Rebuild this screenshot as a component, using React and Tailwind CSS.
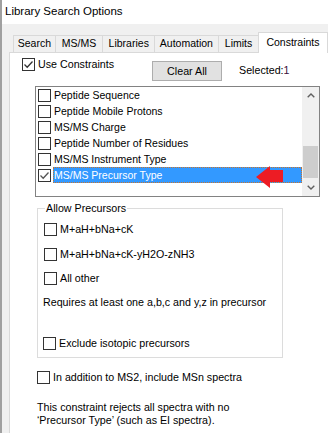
import React from "react";

const TABS = [
  { label: "Search", w: "w-[42px]" },
  { label: "MS/MS", w: "w-[48px]" },
  { label: "Libraries", w: "w-[52px]" },
  { label: "Automation", w: "w-[64px]" },
  { label: "Limits", w: "w-[41px]" },
];

const ITEMS = [
  "Peptide Sequence",
  "Peptide Mobile Protons",
  "MS/MS Charge",
  "Peptide Number of Residues",
  "MS/MS Instrument Type",
  "MS/MS Precursor Type",
];

function Box({ checked, tone = "#333333" }) {
  return (
    <span className="flex h-[13px] w-[13px] shrink-0 items-center justify-center border border-[#333333] bg-white">
      {checked && (
        <svg width="11" height="11" viewBox="0 0 11 11">
          <path d="M1.5 5.5 L4.2 8.2 L9.5 2.5" fill="none" stroke={tone} strokeWidth="1.3" />
        </svg>
      )}
    </span>
  );
}

function Check({ label, className = "" }) {
  return (
    <div className={`flex items-center gap-[3px] leading-[14px] ${className}`}>
      <Box />
      <span>{label}</span>
    </div>
  );
}

function Chevron({ down }) {
  return (
    <svg width="8" height="5" viewBox="0 0 8 5">
      <path
        d={down ? "M0.7 0.7 L4 4 L7.3 0.7" : "M0.7 4.3 L4 1 L7.3 4.3"}
        fill="none"
        stroke="#606060"
        strokeWidth="1.4"
      />
    </svg>
  );
}

export default function App() {
  return (
    <div className="flex h-[433px] w-[328px] flex-col overflow-hidden border-l-2 border-[#a0a0a0] bg-[#f0f0f0] text-[10.7px] text-black font-['Liberation_Sans',Arial,sans-serif]">
      {/* title bar */}
      <div className="flex h-[24px] shrink-0 items-center bg-white pl-[3px] text-[11.5px]">
        Library Search Options
      </div>

      <div className="ml-[7px] flex flex-1 flex-col">
        {/* tab strip */}
        <div className="relative z-10 flex h-[28px] shrink-0 items-end pl-[4px] text-[10.5px]">
          {TABS.map((t) => (
            <div
              key={t.label}
              className={`flex h-[17px] items-center justify-center border-l border-t border-[#d9d9d9] bg-[#f0f0f0] ${t.w}`}
            >
              {t.label}
            </div>
          ))}
          <div className="-mb-px flex h-[21px] w-[70px] items-center border-l border-r border-t border-[#d9d9d9] bg-white pb-[1px] pl-[7px]">
            Constraints
          </div>
        </div>

        {/* tab page */}
        <div className="flex flex-1 flex-col border-l border-t border-[#d9d9d9] bg-white">
          <div className="flex h-[33px] shrink-0 items-start">
            <div className="ml-[12px] mt-[4px] flex w-[130px] items-center gap-[3px] leading-[14px]">
              <Box checked />
              <span>Use Constraints</span>
            </div>
            <div className="mt-[8px] flex h-[20px] w-[70px] items-center justify-center border border-[#adadad] bg-[#e1e1e1]">
              Clear All
            </div>
            <div className="ml-[17px] mt-[10px] leading-[14px]">
              Selected:<span className="text-[#3b0f3b]">1</span>
            </div>
          </div>

          {/* list box */}
          <div className="relative ml-[25px] flex h-[111px] w-[285px] shrink-0 border border-[#828282] bg-white text-[10.5px]">
            <div className="flex flex-1 flex-col">
              {ITEMS.map((item, i) => {
                const sel = i === ITEMS.length - 1;
                return (
                  <div key={item} className="flex h-[16px] items-center">
                    <span className="ml-[2px]">
                      <Box checked={sel} tone="#555555" />
                    </span>
                    <span
                      className={`ml-[2px] flex h-full flex-1 items-center leading-[14px] ${
                        sel
                          ? "border border-dotted border-[#c8742e] bg-[#3399ff] text-white"
                          : "pl-[1px]"
                      }`}
                    >
                      {item}
                    </span>
                  </div>
                );
              })}
            </div>
            <div className="flex w-[17px] flex-col bg-[#f0f0f0]">
              <div className="flex h-[17px] items-center justify-center">
                <Chevron />
              </div>
              <div className="flex-1">
                <div className="mx-[1px] mt-[42px] h-[32px] bg-[#cdcdcd]" />
              </div>
              <div className="flex h-[17px] items-center justify-center">
                <Chevron down />
              </div>
            </div>
            <svg
              className="absolute left-[220px] top-[79px]"
              width="28"
              height="22"
              viewBox="0 0 28 22"
            >
              <polygon points="0,11 14,0 14,4 27,4 27,16 14,16 14,22" fill="#ed1c24" />
            </svg>
          </div>

          {/* Allow Precursors group */}
          <div className="relative ml-[27px] mt-[11px] flex h-[150px] w-[246px] shrink-0 flex-col border border-[#dcdcdc]">
            <span className="absolute left-[7px] top-[-8px] bg-white px-[1px] leading-[14px]">
              Allow Precursors
            </span>
            <Check className="ml-[6px] mt-[13px]" label="M+aH+bNa+cK" />
            <Check className="ml-[6px] mt-[11px]" label="M+aH+bNa+cK-yH2O-zNH3" />
            <Check className="ml-[6px] mt-[10px]" label="All other" />
            <div className="ml-[5px] mt-[10px] leading-[14px]">
              Requires at least one a,b,c and y,z in precursor
            </div>
            <Check className="ml-[5px] mt-[27px]" label="Exclude isotopic precursors" />
          </div>

          <Check className="ml-[27px] mt-[12px]" label="In addition to MS2, include MSn spectra" />

          <p className="ml-[27px] mt-[17px] leading-[13px]">
            This constraint rejects all spectra with no
            <br />
            ‘Precursor Type’ (such as EI spectra).
          </p>
        </div>
      </div>
    </div>
  );
}
